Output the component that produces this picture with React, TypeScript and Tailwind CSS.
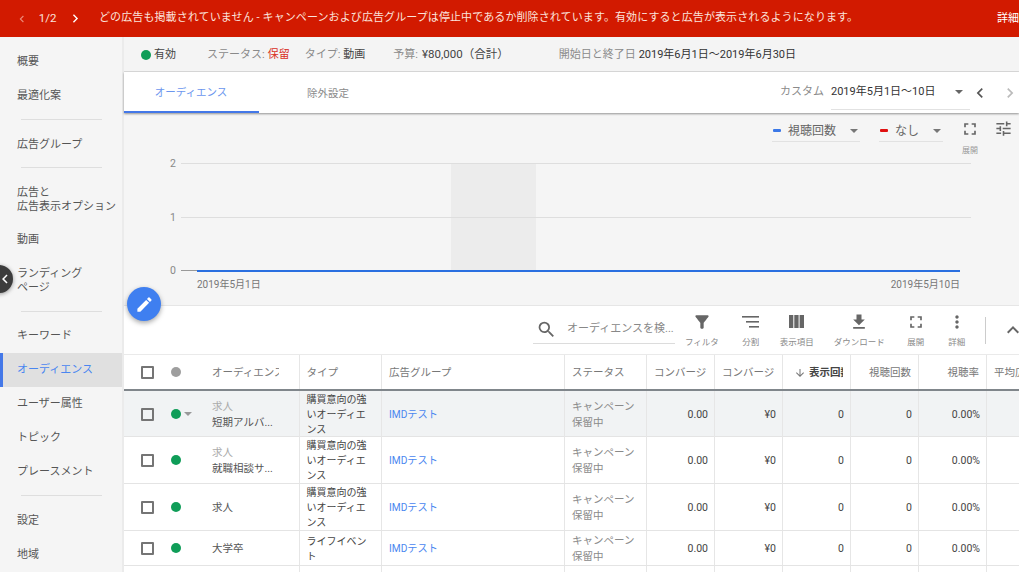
import {
  MdArrowDownward,
  MdChevronLeft,
  MdChevronRight,
  MdEdit,
  MdExpandLess,
  MdFileDownload,
  MdFilterAlt,
  MdFullscreen,
  MdMoreVert,
  MdSearch,
  MdTune,
} from "react-icons/md";

const font = "font-['Roboto','Noto_Sans_CJK_JP',sans-serif]";

function Divider({ className }: { className: string }) {
  return <div className={`mx-[21px] h-px w-[81px] bg-[#dedede] ${className}`} />;
}

function NavItem({ children, active, tall }: { children: React.ReactNode; active?: boolean; tall?: boolean }) {
  return (
    <div
      className={`flex items-center text-[11px] leading-[14px] ${tall ? "h-[47px]" : "h-[34px]"} ${
        active ? "border-l-[3px] pl-[14px] border-[#4478e8] bg-[#e0e0e0] text-[#4a86f0]" : "pl-[17px] text-[#555]"
      }`}
    >
      <span className="whitespace-nowrap">{children}</span>
    </div>
  );
}

function Sidebar() {
  return (
    <aside className="w-[124px] shrink-0 border-r-2 border-[#ebebeb] bg-[#f5f5f5] pt-[8px]">
      <NavItem>概要</NavItem>
      <NavItem>最適化案</NavItem>
      <Divider className="mt-[6px] mb-[8px]" />
      <NavItem>広告グループ</NavItem>
      <Divider className="mt-[5px] mb-[8px]" />
      <NavItem tall>
        広告と
        <br />
        広告表示オプション
      </NavItem>
      <NavItem>動画</NavItem>
      <NavItem tall>
        ランディング
        <br />
        ページ
      </NavItem>
      <Divider className="mt-[7px] mb-[7px]" />
      <NavItem>キーワード</NavItem>
      <NavItem active>オーディエンス</NavItem>
      <NavItem>ユーザー属性</NavItem>
      <NavItem>トピック</NavItem>
      <NavItem>プレースメント</NavItem>
      <Divider className="mt-[6px] mb-[8px]" />
      <NavItem>設定</NavItem>
      <NavItem>地域</NavItem>
    </aside>
  );
}

function Banner() {
  return (
    <div className="flex h-[37px] shrink-0 items-center bg-[#d21a00] text-[11px] text-[#fbe3dc]">
      <MdChevronLeft className="ml-[15px] text-[14px] text-[#ec8a78]" />
      <span className="ml-[10px] text-[11.5px]">1/2</span>
      <MdChevronRight className="ml-[11px] text-[17px] text-white" />
      <span className="mb-[1px] ml-[15px] w-[898px] shrink-0 tracking-[0.1px]">
        どの広告も掲載されていません - キャンペーンおよび広告グループは停止中であるか削除されています。有効にすると広告が表示されるようになります。
      </span>
      <span className="mt-[2px] shrink-0 whitespace-nowrap text-white">詳細</span>
    </div>
  );
}

function SummaryBar() {
  return (
    <div className="flex h-[35px] shrink-0 items-center border-b border-[#dcdcdc] bg-[#f4f4f4] pt-[2px] text-[11px] text-[#8a8a8a]">
      <span className="ml-[17px] h-[10px] w-[10px] rounded-full bg-[#0f9d58]" />
      <span className="ml-[3px] text-[#444]">有効</span>
      <span className="ml-[31px]">ステータス:</span>
      <span className="ml-[3px] text-[#d93025]">保留</span>
      <span className="ml-[15px]">タイプ:</span>
      <span className="ml-[3px] text-[#444]">動画</span>
      <span className="ml-[28px]">予算:</span>
      <span className="ml-[4px] text-[11.5px] text-[#444]">¥80,000（合計）</span>
      <span className="ml-[50px]">開始日と終了日</span>
      <span className="ml-[3px] text-[#333]">2019年6月1日〜2019年6月30日</span>
    </div>
  );
}

function TabBar() {
  return (
    <div className="z-10 flex h-[41px] shrink-0 items-center bg-white shadow-[0_1px_2px_rgba(0,0,0,0.4)]">
      <div className="flex h-full w-[135px] items-center justify-center border-b-2 border-[#4478e8] pt-[3px] pr-[1px] text-[10.5px] text-[#6b96ee]">
        オーディエンス
      </div>
      <div className="ml-[48px] pt-[3px] text-[10.5px] text-[#8a8a8a]">除外設定</div>
      <div className="ml-auto mr-[-1px] flex items-center">
        <span className="text-[11px] text-[#8a8a8a]">カスタム</span>
        <div className="ml-[7px] flex h-[34px] w-[139px] items-center border-b border-[#e2e2e2] text-[11px] text-[#333]">
          <span>2019年5月1日〜10日</span>
          <span className="ml-auto mr-[7px] h-0 w-0 border-x-[4px] border-t-[4px] border-x-transparent border-t-[#666]" />
        </div>
        <MdChevronLeft className="text-[20px] text-[#555]" />
        <MdChevronRight className="ml-[10px] text-[20px] text-[#bbb]" />
      </div>
    </div>
  );
}

function MetricSelect({ color, label, width }: { color: string; label: string; width: string }) {
  return (
    <div className={`flex h-[28px] items-center border-b border-[#e2e2e2] pt-[6px] text-[12px] text-[#666] ${width}`}>
      <span className={`ml-[1px] h-[3px] w-[8px] rounded-[1px] ${color}`} />
      <span className="ml-[7px]">{label}</span>
      <span className="ml-auto mr-[2px] h-0 w-0 border-x-[4px] border-t-[4px] border-x-transparent border-t-[#777]" />
    </div>
  );
}

function ChartPanel() {
  return (
    <div className="flex h-[193px] shrink-0 flex-col border-b border-[#e6e6e6] bg-[#f5f5f5]">
      <div className="flex h-[40px] shrink-0 items-start justify-end pt-[1px]">
        <MetricSelect color="bg-[#3b78e7]" label="視聴回数" width="w-[88px]" />
        <div className="ml-[19px]">
          <MetricSelect color="bg-[#e01010]" label="なし" width="w-[64px]" />
        </div>
        <div className="ml-[17px] flex w-[20px] flex-col items-center">
          <MdFullscreen className="mt-[5px] text-[20px] text-[#666]" />
          <span className="mt-[6px] text-[8px] text-[#999]">展開</span>
        </div>
        <MdTune className="ml-[14px] mr-[6px] mt-[5px] text-[19px] text-[#666]" />
      </div>
      <svg viewBox="0 0 895 151" className="h-[151px] w-[895px] shrink-0">
        <rect x="327" y="10" width="85" height="107" fill="#ececec" />
        <line x1="57" x2="847" y1="10.5" y2="10.5" stroke="#dedede" />
        <line x1="57" x2="847" y1="64.5" y2="64.5" stroke="#dedede" />
        <line x1="57" x2="73" y1="117.5" y2="117.5" stroke="#999" />
        <line x1="73" x2="836" y1="118" y2="118" stroke="#2a6fe0" strokeWidth="2" />
        <g fontFamily="Roboto" fontSize="10.5" fill="#888">
          <text x="52" y="14" textAnchor="end">2</text>
          <text x="52" y="68" textAnchor="end">1</text>
          <text x="52" y="121" textAnchor="end">0</text>
        </g>
        <g fontFamily="Roboto, 'Noto Sans CJK JP'" fontSize="10" fill="#777">
          <text x="73" y="135">2019年5月1日</text>
          <text x="836" y="135" textAnchor="end">2019年5月10日</text>
        </g>
      </svg>
    </div>
  );
}

function SplitIcon() {
  return (
    <svg viewBox="0 0 20 14" className="h-[14px] w-[20px]" fill="#666">
      <rect x="1" y="1" width="17" height="1.6" />
      <rect x="5" y="6" width="13" height="1.6" />
      <rect x="8" y="11" width="10" height="1.6" />
    </svg>
  );
}

function ColumnsIcon() {
  return (
    <svg viewBox="0 0 15 13" className="h-[13px] w-[15px]" fill="#666">
      <rect x="0" y="0" width="4.3" height="13" />
      <rect x="5.3" y="0" width="4.3" height="13" />
      <rect x="10.6" y="0" width="4.4" height="13" />
    </svg>
  );
}

function ToolButton({ icon, label, className }: { icon: React.ReactNode; label: string; className: string }) {
  return (
    <div className={`flex flex-col items-center ${className}`}>
      <div className="flex h-[20px] items-center text-[20px] text-[#666]">{icon}</div>
      <span className="mt-[4px] whitespace-nowrap text-[8.5px] text-[#8a8a8a]">{label}</span>
    </div>
  );
}

function Toolbar() {
  return (
    <div className="flex h-[48px] shrink-0 items-center bg-white">
      <div className="ml-[409px] flex h-[27px] w-[142px] shrink-0 items-center border-b border-[#dcdcdc]">
        <MdSearch className="ml-[3px] text-[21px] text-[#666]" />
        <span className="ml-[10px] text-[11px] text-[#888]">オーディエンスを検...</span>
      </div>
      <ToolButton icon={<MdFilterAlt />} label="フィルタ" className="ml-[10px] w-[34px]" />
      <ToolButton icon={<SplitIcon />} label="分割" className="ml-[22px] w-[20px]" />
      <ToolButton icon={<ColumnsIcon />} label="表示項目" className="ml-[19px] w-[36px]" />
      <ToolButton icon={<MdFileDownload />} label="ダウンロード" className="ml-[20px] w-[52px]" />
      <ToolButton icon={<MdFullscreen />} label="展開" className="ml-[21px] w-[20px]" />
      <ToolButton icon={<MdMoreVert />} label="詳細" className="ml-[21px] w-[20px]" />
      <div className="ml-[18px] h-[27px] w-px shrink-0 bg-[#ccc]" />
      <MdExpandLess className="ml-[15px] shrink-0 text-[24px] text-[#666]" />
    </div>
  );
}

const cols = "grid grid-cols-[88px_87.5px_82.5px_183px_82px_68px_68px_68px_68px_68px_60px]";

function Checkbox() {
  return <span className="block h-[13px] w-[13px] shrink-0 rounded-[1px] border-2 border-[#757575]" />;
}

function HeadCell({ children, right, bold }: { children: React.ReactNode; right?: boolean; bold?: boolean }) {
  return (
    <div
      className={`flex items-center overflow-hidden whitespace-nowrap border-r border-[#e6e6e6] px-[7px] pt-[1px] text-[10.5px] ${
        right ? "justify-end" : ""
      } ${bold ? "font-bold text-[#444]" : "text-[#777]"}`}
    >
      {children}
    </div>
  );
}

function TableHead() {
  return (
    <div className={`${cols} h-[37px] shrink-0 border-t border-t-[#eaeaea] border-b-2 border-b-[#80868b] bg-white`}>
      <div className="flex items-center pl-[17px]">
        <Checkbox />
        <span className="ml-[17px] h-[10px] w-[10px] rounded-full bg-[#9e9e9e]" />
      </div>
      <div className="flex items-center overflow-hidden whitespace-nowrap border-r border-[#e6e6e6] pt-[1px] text-[10.5px] text-[#777]">
        <span className="w-[67px] overflow-hidden">オーディエンス</span>
      </div>
      <HeadCell>タイプ</HeadCell>
      <HeadCell>広告グループ</HeadCell>
      <HeadCell>ステータス</HeadCell>
      <HeadCell>
        <span className="w-[55px] overflow-hidden">コンバージョン</span>
      </HeadCell>
      <HeadCell>
        <span className="w-[55px] overflow-hidden">コンバージョン</span>
      </HeadCell>
      <HeadCell bold right>
        <MdArrowDownward className="mr-[3px] shrink-0 text-[12px] font-normal text-[#777]" />
        <span className="w-[34px] overflow-hidden">表示回数</span>
      </HeadCell>
      <HeadCell right>視聴回数</HeadCell>
      <HeadCell right>視聴率</HeadCell>
      <HeadCell>平均広告視聴単価</HeadCell>
    </div>
  );
}

type RowData = {
  sub?: string;
  name: string;
  type: string[];
  selected?: boolean;
  height: string;
};

const rows: RowData[] = [
  { sub: "求人", name: "短期アルバ...", type: ["購買意向の強", "いオーディエ", "ンス"], selected: true, height: "h-[46px]" },
  { sub: "求人", name: "就職相談サ...", type: ["購買意向の強", "いオーディエ", "ンス"], height: "h-[47px]" },
  { name: "求人", type: ["購買意向の強", "いオーディエ", "ンス"], height: "h-[47px]" },
  { name: "大学卒", type: ["ライフイベン", "ト"], height: "h-[35px]" },
  { name: "", type: ["ライフイベン", "ト"], height: "h-[35px]" },
];

function NumCell({ children }: { children: React.ReactNode }) {
  return (
    <div className="flex items-center justify-end border-r border-[#e6e6e6] pr-[6px] pt-[1px] text-[10.5px] text-[#444]">
      {children}
    </div>
  );
}

function Row({ row, last }: { row: RowData; last: boolean }) {
  return (
    <div className={`${cols} ${row.height} shrink-0 border-b border-[#e4e4e4] ${row.selected ? "bg-[#f1f3f4]" : "bg-white"}`}>
      <div className="flex items-center pl-[17px]">
        {!last && <Checkbox />}
        {!last && <span className="ml-[17px] h-[10px] w-[10px] shrink-0 rounded-full bg-[#0f9d58]" />}
        {row.selected && (
          <span className="ml-[3px] h-0 w-0 border-x-[4px] border-t-[4px] border-x-transparent border-t-[#999]" />
        )}
      </div>
      <div className="flex flex-col justify-center border-r border-[#e6e6e6] pt-[1px] text-[10.5px] leading-[16px]">
        {row.sub && <span className="text-[#aaa]">{row.sub}</span>}
        <span className="text-[#555]">{row.name}</span>
      </div>
      <div className="flex flex-col justify-center border-r border-[#e6e6e6] px-[7px] pt-[1px] text-[10px] leading-[15px] text-[#444]">
        {row.type.map((line) => (
          <span key={line} className="whitespace-nowrap">
            {line}
          </span>
        ))}
      </div>
      <div className="flex items-center border-r border-[#e6e6e6] px-[7px] pt-[1px] text-[10.2px] text-[#4a86f0]">
        {!last && "IMDテスト"}
      </div>
      <div className="flex flex-col justify-center border-r border-[#e6e6e6] px-[7px] pt-[1px] text-[10.5px] leading-[16px] text-[#8a8a8a]">
        {!last && <span>キャンペーン</span>}
        {!last && <span>保留中</span>}
      </div>
      <NumCell>{!last && "0.00"}</NumCell>
      <NumCell>{!last && "¥0"}</NumCell>
      <NumCell>{!last && "0"}</NumCell>
      <NumCell>{!last && "0"}</NumCell>
      <NumCell>{!last && "0.00%"}</NumCell>
      <div />
    </div>
  );
}

export default function App() {
  return (
    <div className={`${font} relative flex h-[572px] w-[1019px] flex-col overflow-hidden bg-white`}>
      <Banner />
      <div className="flex min-h-0 flex-1">
        <Sidebar />
        <main className="flex w-[895px] shrink-0 flex-col">
          <SummaryBar />
          <TabBar />
          <ChartPanel />
          <Toolbar />
          <TableHead />
          {rows.map((row, i) => (
            <Row key={i} row={row} last={i === rows.length - 1} />
          ))}
        </main>
      </div>
      <div className="absolute left-[-15px] top-[265px] flex h-[28px] w-[28px] items-center justify-end rounded-full bg-[#3c3c3c] shadow-[0_1px_4px_rgba(0,0,0,0.4)]">
        <MdChevronLeft className="mr-[-1px] text-[18px] text-white" />
      </div>
      <div className="absolute left-[127px] top-[287px] flex h-[34px] w-[34px] items-center justify-center rounded-full bg-[#3f7ff0] shadow-[0_2px_5px_rgba(0,0,0,0.35)]">
        <MdEdit className="text-[19px] text-white" />
      </div>
    </div>
  );
}
